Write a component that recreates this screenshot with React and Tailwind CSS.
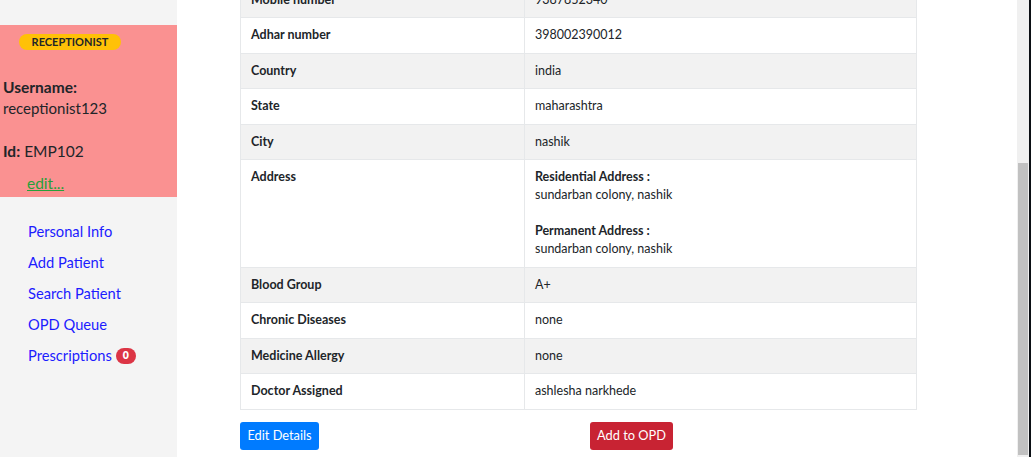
import React from 'react';

const rows = [
  { label: 'Mobile number', value: '9387852340' },
  { label: 'Adhar number', value: '398002390012' },
  { label: 'Country', value: 'india' },
  { label: 'State', value: 'maharashtra' },
  { label: 'City', value: 'nashik' },
  { label: 'Address', address: true },
  { label: 'Blood Group', value: 'A+' },
  { label: 'Chronic Diseases', value: 'none' },
  { label: 'Medicine Allergy', value: 'none' },
  { label: 'Doctor Assigned', value: 'ashlesha narkhede' },
];

const links = ['Personal Info', 'Add Patient', 'Search Patient', 'OPD Queue'];

const Sidebar = () => (
  <aside className="w-[177px] shrink-0 bg-[#f4f4f4] pt-[25px]">
    <div className="h-[172px] bg-[#fa9191] text-[#212529]">
      <div className="ml-[19px] pt-[9px]">
        <span className="flex h-[16px] w-[102px] items-center justify-center rounded-full bg-[#ffc107] text-[11px] font-bold">
          RECEPTIONIST
        </span>
      </div>
      <div className="mt-[27px] pl-[3px] text-[15.5px] leading-[21px]">
        <div className="font-bold">Username:</div>
        <div className="text-[15px]">receptionist123</div>
        <div className="mt-[22px]">
          <span className="font-bold">Id:</span> EMP102
        </div>
        <a href="#" className="mt-[11px] ml-[24px] block w-fit text-[#28a03a] underline">
          edit...
        </a>
      </div>
    </div>
    <nav className="mt-[19px] pl-[28px]">
      <ul className="text-[14.7px] leading-[31px] text-[#1c1cff]">
        {links.map((l) => (
          <li key={l}>
            <a href="#">{l}</a>
          </li>
        ))}
        <li className="flex items-center gap-[4px]">
          <a href="#">Prescriptions</a>
          <span className="flex h-[16px] w-[20px] items-center justify-center rounded-full bg-[#dc3545] text-[10.5px] font-extrabold leading-none text-white">
            0
          </span>
        </li>
      </ul>
    </nav>
  </aside>
);

const DetailsTable = () => (
  <table className="-mt-[18.5px] ml-[63px] w-[677px] border-collapse text-[12.5px] leading-[18px] text-[#212529]">
    <tbody>
      {rows.map((r, i) => (
        <tr key={r.label} className={i % 2 === 0 ? 'bg-[#f2f2f2]' : 'bg-white'}>
          <td className="w-[284px] border border-[#e6e8ea] px-[10px] py-[8.25px] align-top font-bold">
            {r.label}
          </td>
          <td className="border border-[#e6e8ea] px-[10px] py-[8.25px] align-top">
            {r.address ? (
              <div>
                <div className="font-bold">Residential Address :</div>
                <div>sundarban colony, nashik</div>
                <br />
                <div className="font-bold">Permanent Address :</div>
                <div>sundarban colony, nashik</div>
              </div>
            ) : (
              r.value
            )}
          </td>
        </tr>
      ))}
    </tbody>
  </table>
);

export default function App() {
  return (
    <div className="flex h-[457px] overflow-hidden bg-white font-['Lato',sans-serif]">
      <Sidebar />
      <main className="flex-1">
        <DetailsTable />
        <div className="mt-[12px] ml-[63px] flex">
          <button className="h-[28px] w-[79px] rounded-[3px] bg-[#007bff] text-[12.8px] text-white">
            Edit Details
          </button>
          <button className="ml-[271px] h-[28px] w-[83px] rounded-[3px] bg-[#c82333] text-[12.8px] text-white">
            Add to OPD
          </button>
        </div>
      </main>
      <div className="flex w-[14px] shrink-0">
        <div className="w-[12px] bg-[#f0f0f0] pt-[163px] pl-[1px]">
          <div className="h-[292px] w-[10px] bg-[#c1c1c1]" />
        </div>
        <div className="w-[2px] bg-[#0b0f14]" />
      </div>
    </div>
  );
}
